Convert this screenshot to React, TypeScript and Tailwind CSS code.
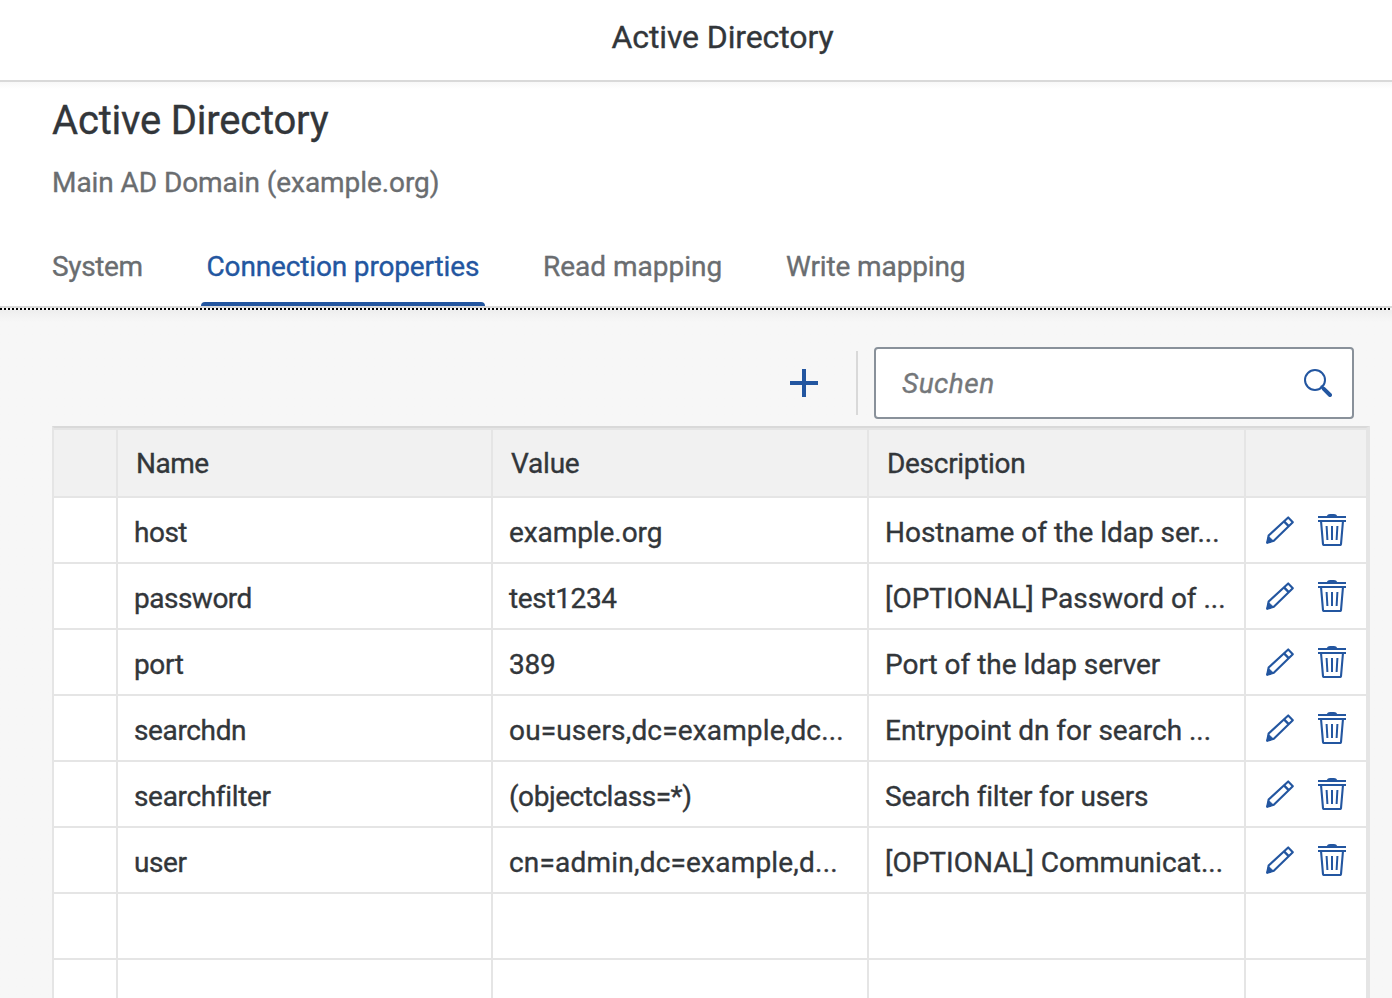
import React from "react";

type Text = { text: string; tracking: string };
type Property = { name: Text; value: Text; description: Text };

const properties: Property[] = [
  {
    name: { text: "host", tracking: "tracking-[-0.5px]" },
    value: { text: "example.org", tracking: "tracking-[-0.08px]" },
    description: { text: "Hostname of the ldap ser...", tracking: "tracking-[-0.03px]" },
  },
  {
    name: { text: "password", tracking: "tracking-[-0.5px]" },
    value: { text: "test1234", tracking: "tracking-[-0.36px]" },
    description: { text: "[OPTIONAL] Password of ...", tracking: "tracking-[-0.03px]" },
  },
  {
    name: { text: "port", tracking: "tracking-[-0.4px]" },
    value: { text: "389", tracking: "tracking-[-0.2px]" },
    description: { text: "Port of the ldap server", tracking: "tracking-[-0.03px]" },
  },
  {
    name: { text: "searchdn", tracking: "tracking-[-0.36px]" },
    value: { text: "ou=users,dc=example,dc...", tracking: "tracking-[0.16px]" },
    description: { text: "Entrypoint dn for search ...", tracking: "tracking-[-0.03px]" },
  },
  {
    name: { text: "searchfilter", tracking: "tracking-[-0.33px]" },
    value: { text: "(objectclass=*)", tracking: "tracking-[-0.46px]" },
    description: { text: "Search filter for users", tracking: "tracking-[-0.19px]" },
  },
  {
    name: { text: "user", tracking: "tracking-[-0.4px]" },
    value: { text: "cn=admin,dc=example,d...", tracking: "tracking-[0.2px]" },
    description: { text: "[OPTIONAL] Communicat...", tracking: "tracking-[0px]" },
  },
];

const emptyRows = ["empty-1", "empty-2"];

function PencilIcon() {
  return (
    <svg width="28" height="28" viewBox="0 0 28 28" fill="none" stroke="#2356a0" strokeWidth="2.1" strokeLinejoin="round">
      <path d="M2.6 19.6 22.2 1.4 26.8 6.2 7.8 24.8 1.2 26.8Z" />
      <path d="M18 5.4 22.7 10.2" strokeWidth="2.4" />
      <path d="M2.6 20.4 7.2 24.8 0.8 27Z" fill="#2356a0" strokeWidth="1" />
    </svg>
  );
}

function TrashIcon() {
  return (
    <svg width="28" height="32" viewBox="0 0 28 32" fill="none" stroke="#2356a0">
      <path d="M8.6 2.2Q9.6 0 12 0H16Q18.4 0 19.4 2.2Z" fill="#2356a0" stroke="none" />
      <path d="M0 3H28M0 7H28" strokeWidth="2" />
      <path d="M3.1 8 5 30.2Q5.1 31 6 31H22Q22.9 31 23 30.2L24.9 8" strokeWidth="2.1" />
      <path d="M8.6 12 9.4 26M19.4 12 18.6 26" strokeWidth="2" />
      <path d="M14 12V26" strokeWidth="2" />
    </svg>
  );
}

function Cell({ content }: { content?: Text }) {
  return (
    <div className="overflow-hidden border-r-2 border-b-2 border-[#e5e5e5] pt-[3px] pl-4 leading-[64px] whitespace-nowrap">
      {content && <span className={content.tracking}>{content.text}</span>}
    </div>
  );
}

function HeaderCell({ children }: { children?: React.ReactNode }) {
  return <div className="h-[68px] border-r-2 border-b-2 border-[#e5e5e5] bg-[#f1f1f1] pl-[18px] leading-[68px]">{children}</div>;
}

export default function App() {
  return (
    <div className="h-[998px] w-[1392px] overflow-hidden bg-[#f7f7f7] font-['Roboto',sans-serif] text-[28px] text-[#32363a] [-webkit-text-stroke:0.35px]">
      <header className="flex h-[82px] justify-center border-b-2 border-[#d9d9d9] bg-white pl-[53px] text-[32px] leading-[75px]">
        <span className="tracking-[-0.12px]">Active Directory</span>
      </header>
      <section className="h-[226px] border-b-2 border-[#d9d9d9] bg-white bg-linear-to-b from-[#f8f8f8] to-white to-[7px] px-[52px]">
        <h1 className="pt-3 text-[40px] leading-[54px] tracking-[-0.2px]">Active Directory</h1>
        <p className="mt-[15px] leading-[40px] tracking-[-0.07px] text-[#6a6d70]">Main AD Domain (example.org)</p>
        <nav className="mt-6 flex h-[79px] text-[#6a6d70]">
          <span className="w-[149px] pt-5 leading-[40px] tracking-[-0.35px]">System</span>
          <div className="flex w-[284px] flex-col justify-between pt-5 text-[#2356a0]">
            <span className="pl-[5.5px] leading-[40px] tracking-[-0.15px]">Connection properties</span>
            <div className="h-1 rounded-t-[4px] bg-[#2356a0]" />
          </div>
          <span className="w-[301px] pt-5 pl-[58px] leading-[40px]">Read mapping</span>
          <span className="pt-5 leading-[40px] tracking-[-0.12px]">Write mapping</span>
        </nav>
      </section>
      <div className="h-[2px] bg-[repeating-linear-gradient(90deg,#000_0px,#000_2px,#f7f7f7_2px,#f7f7f7_4px)]" />
      <main className="bg-linear-to-b from-[#eeeeee] to-[#f7f7f7] to-[12px] pl-[52px]">
        <div className="flex h-[116px] items-start pt-[37px]">
          <button className="mt-[22px] ml-[738px] h-7 w-7" aria-label="Add">
            <svg width="28" height="28" viewBox="0 0 28 28" stroke="#2356a0" strokeWidth="4" strokeLinecap="butt">
              <path d="M14 0V28M0 14H28" />
            </svg>
          </button>
          <div className="mt-1 ml-[38px] h-16 w-[2px] bg-[#d9d9d9]" />
          <div className="ml-4 flex h-[72px] w-[480px] items-center justify-between rounded-[4px] border-2 border-[#89919a] bg-white pr-5 pl-[26px]">
            <span className="pt-[2px] tracking-[0.5px] text-[#74777a] italic">Suchen</span>
            <svg width="28" height="28" viewBox="0 0 28 28" fill="none" stroke="#2356a0" strokeLinecap="round">
              <circle cx="11" cy="11" r="10" strokeWidth="2" />
              <path d="M19.8 19.8 26 26" strokeWidth="4" />
              <path d="M17.5 17.5 20 20" strokeWidth="2.2" />
            </svg>
          </div>
        </div>
        <div className="h-[600px] w-[1318px] border-t-2 border-r-4 border-l-2 border-t-[#d9d9d9] border-r-[#e5e5e5] border-l-[#e5e5e5] bg-white">
          <div className="grid h-[70px] grid-cols-[64px_375px_376px_377px_120px] border-t-2 border-[#e5e5e5]">
            <HeaderCell />
            <HeaderCell><span className="tracking-[-0.5px]">Name</span></HeaderCell>
            <HeaderCell><span className="tracking-[-0.2px]">Value</span></HeaderCell>
            <HeaderCell><span className="tracking-[-0.3px]">Description</span></HeaderCell>
            <div className="border-b-2 border-[#e5e5e5] bg-[#f1f1f1]" />
          </div>
          {properties.map((p) => (
            <div key={p.name.text} className="grid h-[66px] grid-cols-[64px_375px_376px_377px_120px]">
              <Cell />
              <Cell content={p.name} />
              <Cell content={p.value} />
              <Cell content={p.description} />
              <div className="flex items-start gap-6 border-b-2 border-[#e5e5e5] pt-4 pl-5">
                <div className="pt-[2px]"><PencilIcon /></div>
                <TrashIcon />
              </div>
            </div>
          ))}
          {emptyRows.map((id) => (
            <div key={id} className="grid h-[66px] grid-cols-[64px_375px_376px_377px_120px]">
              <Cell /><Cell /><Cell /><Cell />
              <div className="border-b-2 border-[#e5e5e5]" />
            </div>
          ))}
        </div>
      </main>
    </div>
  );
}
